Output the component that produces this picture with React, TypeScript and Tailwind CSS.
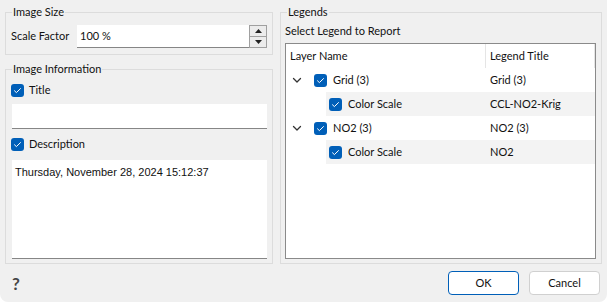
import React from "react"

const font = { fontFamily: 'Lato, "Noto Sans", sans-serif' }

function Check() {
  return (
    <span className="inline-flex w-[13px] h-[13px] shrink-0 rounded-[3px] bg-[#005fb8] items-center justify-center">
      <svg width="13" height="13" viewBox="0 0 13 13" fill="none">
        <path d="M3.5 6.8 L5.4 8.6 L9.5 4.6" stroke="#fff" strokeWidth="1" strokeLinecap="round" strokeLinejoin="round" />
      </svg>
    </span>
  )
}

function Chevron() {
  return (
    <svg width="10" height="10" viewBox="0 0 10 10" fill="none" className="shrink-0">
      <path d="M1.5 3.5 L5 7 L8.5 3.5" stroke="#333" strokeWidth="1.3" strokeLinecap="round" strokeLinejoin="round" />
    </svg>
  )
}

function Tri({ up }: { up?: boolean }) {
  return (
    <svg width="7" height="4" viewBox="0 0 7 4">
      <path d={up ? "M0 4 L3.5 0 L7 4 Z" : "M0 0 L3.5 4 L7 0 Z"} fill="#222" />
    </svg>
  )
}

const rows = [
  { name: "Grid (3)", title: "Grid (3)", child: false },
  { name: "Color Scale", title: "CCL-NO2-Krig", child: true },
  { name: "NO2 (3)", title: "NO2 (3)", child: false },
  { name: "Color Scale", title: "NO2", child: true },
]

export default function App() {
  return (
    <div className="w-[607px] h-[302px] bg-[#f0f0f0] rounded-b-[8px] overflow-hidden text-[11px] text-[#111] flex flex-col" style={font}>
      <div className="flex pt-[4px] px-[5px] gap-[7px] h-[264px]">
        {/* left column */}
        <div className="w-[268px] flex flex-col gap-[6px]">
          <fieldset className="border border-[#dcdcdc] pl-[5px] pr-[5px] pb-[6px]">
            <legend className="ml-[1px] px-[1px] leading-[16px]">Image Size</legend>
            <div className="flex items-center mt-[5px] h-[23px]">
              <span className="w-[66px] shrink-0 whitespace-nowrap">Scale Factor</span>
              <div className="flex-1 h-[23px] bg-white border-b border-[#868686] flex items-center pl-[3px]">
                <span className="flex-1">100 %</span>
                <div className="w-[18px] h-[23px] flex flex-col border border-[#a0a0a0] bg-[#ececec]">
                  <div className="flex-1 flex items-center justify-center border-b border-[#a0a0a0]"><Tri up /></div>
                  <div className="flex-1 flex items-center justify-center"><Tri /></div>
                </div>
              </div>
            </div>
          </fieldset>

          <fieldset className="flex-1 border border-[#dcdcdc] pl-[5px] pr-[5px] pb-[4px] flex flex-col">
            <legend className="ml-[1px] px-[1px] leading-[16px]">Image Information</legend>
            <div className="flex items-center gap-[5px] h-[16px] mt-[5px]">
              <Check />
              <span>Title</span>
            </div>
            <div className="ml-[1px] mt-[6px] h-[25px] bg-white border-b border-[#868686]" />
            <div className="flex items-center gap-[5px] h-[16px] mt-[7px]">
              <Check />
              <span>Description</span>
            </div>
            <div className="ml-[1px] mt-[8px] flex-1 bg-white border-b border-[#868686] px-[3px] pt-[4px]">
              <span className="text-[11px] text-[#111]" style={{ fontFamily: '"Liberation Sans", Arial, sans-serif' }}>
                Thursday, November 28, 2024 15:12:37
              </span>
            </div>
          </fieldset>
        </div>

        {/* right column */}
        <fieldset className="flex-1 border border-[#dcdcdc] pl-[4px] pr-[5px] pb-[4px] flex flex-col">
          <legend className="ml-[2px] px-[1px] leading-[16px]">Legends</legend>
          <div className="leading-[16px] mt-[3px]">Select Legend to Report</div>
          <div className="mt-[4px] flex-1 bg-white border border-[#8a8a8a]">
            <div className="flex h-[24px] items-center">
              <div className="w-[200px] pl-[4px] h-full flex items-center border-r border-[#e5e5e5]">Layer Name</div>
              <div className="flex-1 pl-[4px] h-full flex items-center border-r border-[#e5e5e5]">Legend Title</div>
            </div>
            {rows.map((r, i) => (
              <div key={i} className="flex h-[24px] items-center">
                <div className={`w-[200px] h-full flex items-center ${r.child ? "pl-[40px]" : "pl-[6px]"}`}>
                  {!r.child && <Chevron />}
                  <div className={`h-full flex items-center gap-[6px] flex-1 ${r.child ? "bg-[#f3f3f3] pl-[3px]" : "pl-[12px]"}`}>
                    <Check />
                    <span>{r.name}</span>
                  </div>
                </div>
                <div className={`flex-1 h-full pl-[4px] flex items-center ${r.child ? "bg-[#f3f3f3]" : ""}`}>{r.title}</div>
              </div>
            ))}
          </div>
        </fieldset>
      </div>

      {/* bottom bar */}
      <div className="flex-1 flex items-center pl-[12px] pr-[7px]">
        <span className="text-[17px] font-bold text-[#444] leading-none">?</span>
        <div className="flex-1" />
        <button className="w-[71px] h-[24px] bg-white border border-[#005fb8] rounded-[4px] text-[11px]">OK</button>
        <button className="w-[71px] h-[24px] ml-[10px] bg-white border border-[#d0d0d0] rounded-[4px] text-[11px]">Cancel</button>
      </div>
    </div>
  )
}
